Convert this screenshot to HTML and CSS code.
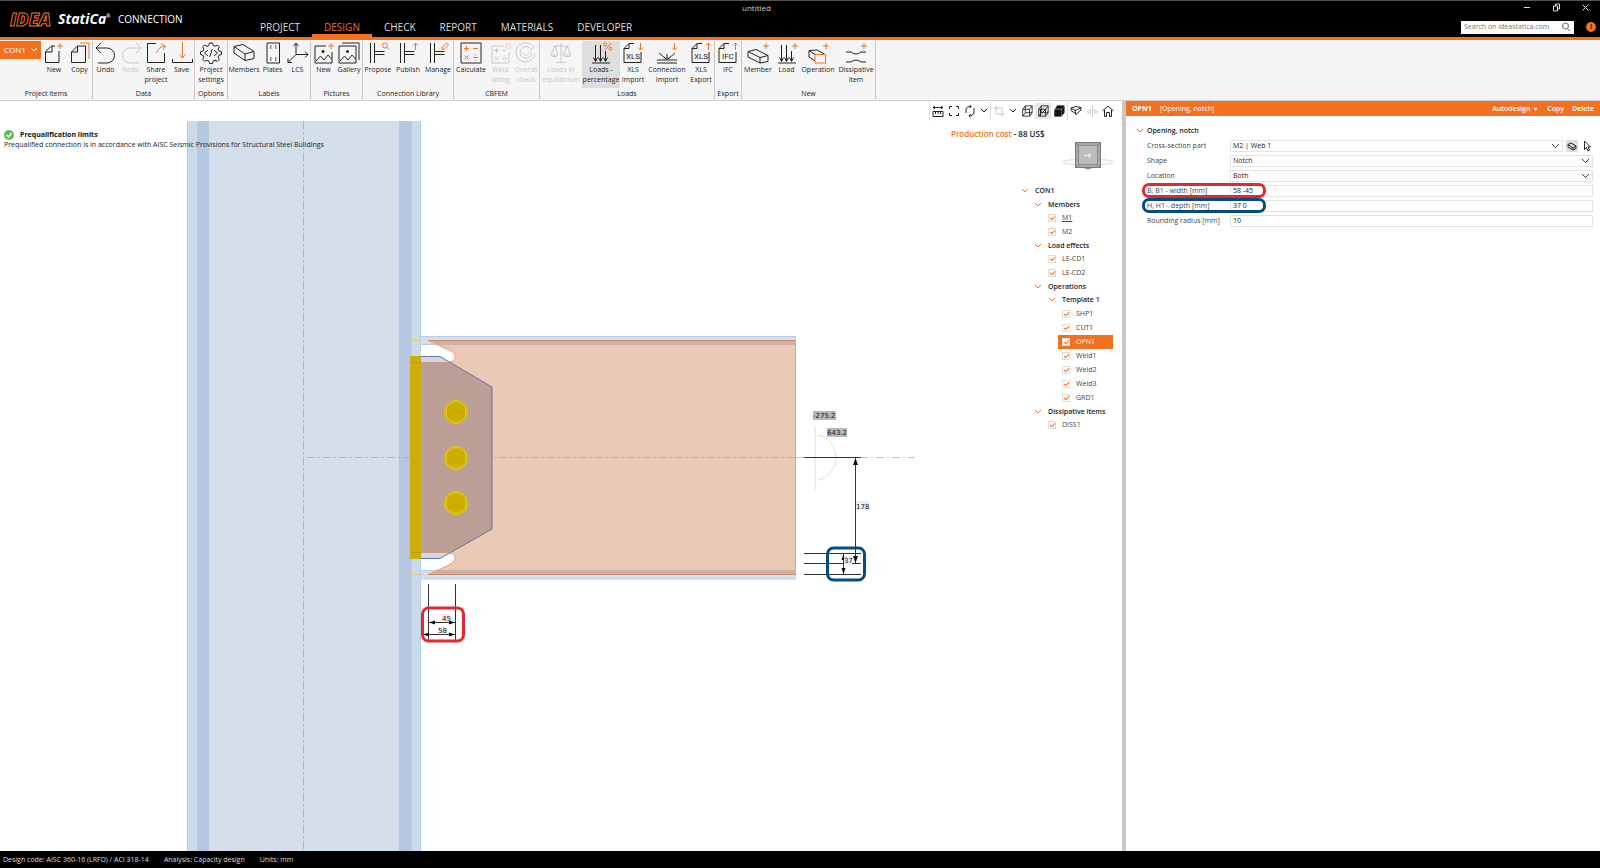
FILE: index.html
```html
<!DOCTYPE html>
<html lang="en">
<head>
  <meta charset="UTF-8">
  <meta name="viewport" content="width=device-width, initial-scale=1.0">
  <title>untitled - IDEA StatiCa Connection</title>
  <link rel="stylesheet" href="styles.css">
</head>
<body>
  <!-- icon set -->
  <svg class="icon-defs" aria-hidden="true">
    <symbol id="i-plus" viewBox="0 0 24 22"><path class="o" d="M17 4h6M20 1v6"/></symbol>
    <symbol id="i-new" viewBox="0 0 24 22"><path d="M17 9v11.500H3.500V9.500L9.500 4H13M3.500 10H10V4"/><path class="o" d="M15 4h6M18 1v6"/></symbol>
    <symbol id="i-copy" viewBox="0 0 24 22"><path d="M3.500 10V20.500H17.500V4H9.500zM3.500 10H9.500V4"/><path class="o" d="M12 1h9v16"/></symbol>
    <symbol id="i-undo" viewBox="0 0 24 22"><path d="M7 1L2 6l5 5M2 6h11a7.500 7.500 0 0 1 0 15H4"/></symbol>
    <symbol id="i-redo" viewBox="0 0 24 22"><path d="M17 1l5 5-5 5M22 6H11a7.500 7.500 0 0 0 0 15h9"/></symbol>
    <symbol id="i-share" viewBox="0 0 24 22"><path d="M12 1.500H3.500v19h17V11"/><path class="o" d="M12.500 11Q14 5 21 4M17 1.500L21.500 4 19 8"/></symbol>
    <symbol id="i-save" viewBox="0 0 24 22"><path d="M2.500 17v3.500h20V17"/><path class="o" d="M12.500 0v16M9.500 12.500l3 3.500 3-3.500"/></symbol>
    <symbol id="i-gear" viewBox="0 0 24 22"><path d="M10.500 1h3l.7 2.500 1.800.800L18.300 3l2 2-1.200 2.300.8 1.800 2.600.7v2.700l-2.600.8-.8 1.700 1.200 2.400-2 2-2.300-1.300-1.800.8-.7 2.600h-3l-.7-2.600-1.800-.8-2.300 1.300-2-2 1.200-2.400-.8-1.700-2.600-.8V9.800l2.600-.7.8-1.800L3.700 5l2-2L8 4.300l1.800-.8zM9 8l-3.500 3L9 14M15 8l3.500 3-3.500 3M13.300 7l-2.600 8"/></symbol>
    <symbol id="i-members" viewBox="0 0 24 22"><path d="M2 4.500L11 2.500 22 9.500 13 12zM2 4.500V11L13 18.500 22 16.500V9.500M13 12v6.500"/></symbol>
    <symbol id="i-plates" viewBox="0 0 24 22"><path d="M6 1h12.500v20H6z"/><path d="M9 4h1.500M14 4h1.500M9 6h1.500M14 6h1.500M9 16h1.500M14 16h1.500M9 18h1.500M14 18h1.500"/></symbol>
    <symbol id="i-lcs" viewBox="0 0 24 22"><path d="M10 1v11.500h12M10 12.500L2 20.500M7.500 4L10 1l2.500 3M19 9.500l3 3-3 3M2 16.500v4h4"/></symbol>
    <symbol id="i-picnew" viewBox="0 0 24 22"><path d="M14 4H3v17h17V10M4 19l4.500-5 3.500 4 4-5 3.500 4"/><circle class="f" cx="11" cy="9.500" r="1.500"/><path class="o" d="M16 4h6M19 1v6"/></symbol>
    <symbol id="i-gallery" viewBox="0 0 24 22"><path d="M2 4h17v17H2zM5 1h17v17M3 19l4.500-5 3.500 4 4-5 3.500 4"/><circle class="f" cx="10.500" cy="9.500" r="1.500"/></symbol>
    <symbol id="i-join" viewBox="0 0 24 22"><path d="M4.500 1v20M8.500 1v20M8.500 9.500h10M8.500 12.500h10"/></symbol>
    <symbol id="i-calc" viewBox="0 0 24 22"><path d="M2 1h20v20H2z"/><path class="o" d="M5 6.500h5M7.500 4v5M14 6.500h5M5.500 13.500l4 4M9.500 13.500l-4 4M14 15.500h5M16.500 12.500v1M16.500 17.500v1"/></symbol>
    <symbol id="i-weld" viewBox="0 0 24 22"><path d="M15 4H3v17h17V10M5 8.500h5M7.500 6v5M13 8.500h4M5.500 14.500l4 4M9.500 14.500l-4 4M13 16.500h5M15.500 13.500v1M15.500 18.500v1"/><circle class="o" cx="19.500" cy="4" r="2.500"/></symbol>
    <symbol id="i-check" viewBox="0 0 24 22"><path d="M19 4.500a9.500 9.500 0 1 0 2 7M17 7a6 6 0 1 0 1 4"/><path class="o" d="M8 10l4 4 9-10"/></symbol>
    <symbol id="i-scales" viewBox="0 0 24 22"><path d="M12 1v19.500M7 20.500h10M4 4h16M6 4L2 13h7zM18 4l-4 9h8zM3 14.500h5M15 14.500h6"/></symbol>
    <symbol id="i-loads" viewBox="0 0 24 22"><path d="M3 21h18M6.500 3v16M11.500 3v16M16.500 9v10M4.500 15.500l2 4 2-4M9.500 15.500l2 4 2-4M14.500 15.500l2 4 2-4"/></symbol>
    <symbol id="i-percent" viewBox="0 0 24 22"><path class="o" d="M22 1l-6 7"/><circle class="o" cx="16" cy="2.500" r="1.500"/><circle class="o" cx="21.500" cy="6.500" r="1.500"/></symbol>
    <symbol id="i-doc" viewBox="0 0 24 22"><path d="M13 1.500H8L3 6.500V20.500H20V10M3 6.500H8V1.500"/></symbol>
    <symbol id="i-up" viewBox="0 0 24 22"><path class="o" d="M19.500 8V1M17 3.500L19.500 1 22 3.500"/></symbol>
    <symbol id="i-down" viewBox="0 0 24 22"><path class="o" d="M19.500 1v7M17 5.500L19.500 8 22 5.500"/></symbol>
    <symbol id="i-connimp" viewBox="0 0 24 22"><path d="M2 18h20M2 21h20M4 11l7 6M20 11l-7 6M12 17V12M9 15l3 2.500L15 15"/></symbol>
    <symbol id="i-member" viewBox="0 0 24 22"><path d="M2 9.500L10 7.500 22 13.500 14 15.500zM2 9.500V15L14 21 22 19.500V13.500M14 15.500V21"/></symbol>
    <symbol id="i-operation" viewBox="0 0 24 22"><path d="M9 19L3 15V8.500L11 8 19 12.500M3 8.500L9 12.500"/><path class="o" d="M9 12.500h10.500V21H9z"/></symbol>
    <symbol id="i-diss" viewBox="0 0 24 22"><path d="M2 10h5q5 4 10 0h5M2 20h5q5-4 10 0h5"/></symbol>
    <symbol id="i-chev" viewBox="0 0 8 6"><path d="M1 1l3 3 3-3"/></symbol>
    <symbol id="i-search" viewBox="0 0 10 10"><circle cx="4.500" cy="4" r="3"/><path d="M6.500 6.500L9 9"/></symbol>
    <symbol id="i-cube" viewBox="0 0 14 14"><path d="M2 5l3-4h8v8l-3 4H2zM2 5h8v8M10 5l3-4M5 1v8h8M5 9l-3 4"/></symbol>
  </svg>

  <header class="header">
    <div class="brand">
      <span class="brand-idea">IDEA</span>
      <span class="brand-name">StatiCa<sup>®</sup></span>
      <span class="brand-app">CONNECTION</span>
    </div>
    <div class="titlebar">
      <div class="title">untitled</div>
      <button class="win-btn" aria-label="Minimize"><svg width="9" height="9"><path d="M1 4.500h6"/></svg></button>
      <button class="win-btn" aria-label="Restore"><svg width="9" height="9"><path d="M1.500 3h4v5h-4zM3.500 3V1h4v5H5.500"/></svg></button>
      <button class="win-btn" aria-label="Close"><svg width="9" height="9"><path d="M1.500 1.500l6 6M7.500 1.500l-6 6"/></svg></button>
    </div>
    <nav class="tabs">
      <a href="#project">PROJECT</a>
      <a href="#design" class="active">DESIGN</a>
      <a href="#check">CHECK</a>
      <a href="#report">REPORT</a>
      <a href="#materials">MATERIALS</a>
      <a href="#developer">DEVELOPER</a>
    </nav>
    <div class="tools">
      <div class="search">
        <input type="text" placeholder="Search on ideastatica.com" aria-label="Search on ideastatica.com">
        <svg class="icon" width="10" height="10"><use href="#i-search"/></svg>
      </div>
      <button class="info" aria-label="Info">i</button>
    </div>
  </header>

  <div class="ribbon">
    <section class="group">
      <div class="buttons">
        <button class="con">CON1 <svg class="icon" width="8" height="6"><use href="#i-chev"/></svg></button>
        <button class="rb w26"><svg class="icon" width="24" height="22"><use href="#i-new"/></svg>New</button>
        <button class="rb w25"><svg class="icon" width="24" height="22"><use href="#i-copy"/></svg>Copy</button>
      </div>
      <h2>Project items</h2>
    </section>
    <section class="group">
      <div class="buttons">
        <button class="rb w25"><svg class="icon" width="24" height="22"><use href="#i-undo"/></svg>Undo</button>
        <button class="rb w25" disabled><svg class="icon" width="24" height="22"><use href="#i-redo"/></svg>Redo</button>
        <button class="rb w26"><svg class="icon" width="24" height="22"><use href="#i-share"/></svg>Share<br>project</button>
        <button class="rb w25"><svg class="icon" width="24" height="22"><use href="#i-save"/></svg>Save</button>
      </div>
      <h2>Data</h2>
    </section>
    <section class="group">
      <div class="buttons">
        <button class="rb w32"><svg class="icon" width="24" height="22"><use href="#i-gear"/></svg>Project<br>settings</button>
      </div>
      <h2>Options</h2>
    </section>
    <section class="group">
      <div class="buttons">
        <button class="rb w32"><svg class="icon" width="24" height="22"><use href="#i-members"/></svg>Members</button>
        <button class="rb w25"><svg class="icon" width="24" height="22"><use href="#i-plates"/></svg>Plates</button>
        <button class="rb w25"><svg class="icon" width="24" height="22"><use href="#i-lcs"/></svg>LCS</button>
      </div>
      <h2>Labels</h2>
    </section>
    <section class="group">
      <div class="buttons">
        <button class="rb w25"><svg class="icon" width="24" height="22"><use href="#i-picnew"/></svg>New</button>
        <button class="rb w26"><svg class="icon" width="24" height="22"><use href="#i-gallery"/></svg>Gallery</button>
      </div>
      <h2>Pictures</h2>
    </section>
    <section class="group">
      <div class="buttons">
        <button class="rb w30"><svg class="icon" width="24" height="22"><use href="#i-join"/><circle class="o" cx="19" cy="3.500" r="2.500"/><path class="o" d="M21 5.500l2 2"/></svg>Propose</button>
        <button class="rb w30"><svg class="icon" width="24" height="22"><use href="#i-join"/><use href="#i-up"/></svg>Publish</button>
        <button class="rb w30"><svg class="icon" width="24" height="22"><use href="#i-join"/><path class="o" d="M16 7.500l.5-2.500 4-4 2 2-4 4z"/></svg>Manage</button>
      </div>
      <h2>Connection Library</h2>
    </section>
    <section class="group">
      <div class="buttons">
        <button class="rb w34"><svg class="icon" width="24" height="22"><use href="#i-calc"/></svg>Calculate</button>
        <button class="rb w25" disabled><svg class="icon" width="24" height="22"><use href="#i-weld"/></svg>Weld<br>sizing</button>
        <button class="rb w26" disabled><svg class="icon" width="24" height="22"><use href="#i-check"/></svg>Overall<br>check</button>
      </div>
      <h2>CBFEM</h2>
    </section>
    <section class="group">
      <div class="buttons">
        <button class="rb w42" disabled><svg class="icon" width="24" height="22"><use href="#i-scales"/></svg>Loads in<br>equilibrium</button>
        <button class="rb w38 on"><svg class="icon" width="24" height="22"><use href="#i-loads"/><use href="#i-percent"/></svg>Loads -<br>percentage</button>
        <button class="rb w26"><svg class="icon" width="24" height="22"><use href="#i-doc"/><use href="#i-down"/><text x="5" y="17">XLS</text></svg>XLS<br>Import</button>
        <button class="rb w42"><svg class="icon" width="24" height="22"><use href="#i-connimp"/><use href="#i-down"/></svg>Connection<br>Import</button>
        <button class="rb w26"><svg class="icon" width="24" height="22"><use href="#i-doc"/><use href="#i-up"/><text x="5" y="17">XLS</text></svg>XLS<br>Export</button>
      </div>
      <h2>Loads</h2>
    </section>
    <section class="group">
      <div class="buttons">
        <button class="rb w26"><svg class="icon" width="24" height="22"><use href="#i-doc"/><use href="#i-up"/><text x="6" y="17">IFC</text></svg>IFC</button>
      </div>
      <h2>Export</h2>
    </section>
    <section class="group">
      <div class="buttons">
        <button class="rb w32"><svg class="icon" width="24" height="22"><use href="#i-member"/><use href="#i-plus"/></svg>Member</button>
        <button class="rb w25"><svg class="icon" width="24" height="22"><use href="#i-loads"/><use href="#i-plus"/></svg>Load</button>
        <button class="rb w38"><svg class="icon" width="24" height="22"><use href="#i-operation"/><use href="#i-plus"/></svg>Operation</button>
        <button class="rb w38"><svg class="icon" width="24" height="22"><use href="#i-diss"/><use href="#i-plus"/></svg>Dissipative<br>item</button>
      </div>
      <h2>New</h2>
    </section>
  </div>

  <main class="main">
    <div class="view">
      <svg class="scene" viewBox="0 101 1122 750" preserveAspectRatio="xMinYMin slice">
        <!-- column -->
        <rect x="187" y="121" width="234" height="740" fill="#d4deea"/>
        <rect x="187" y="121" width="10" height="740" fill="#cbdaeb"/>
        <rect x="411" y="121" width="10" height="740" fill="#cbdaeb"/>
        <rect x="197" y="121" width="12" height="740" fill="#b5c7e0"/>
        <rect x="399" y="121" width="12" height="740" fill="#b5c7e0"/>
        <path d="M187.500 121v740M197.500 121v740M411.500 121v740M420.500 121v740" stroke="#b3cdec" fill="none"/>
        <path d="M303.500 121v740" stroke="#a3b9dc" stroke-dasharray="8 3 2 3" fill="none"/>

        <!-- beam -->
        <path d="M421 336h375v9H421zM421 570h375v9H421z" fill="#d3e0ec"/>
        <path d="M421 336.500h375M421 344.500h375M421 570.500h375M421 579h375" stroke="#b3cdec" fill="none"/>
        <path d="M428 340.500H795.500V574.500H428L449 565Q456 561 455 556.500Q453 552.500 448 552.500H421V362.500H448Q453 362.500 455 358.500Q456 353 449 350z" fill="#eacab6" stroke="#ef9b6e"/>
        <path d="M430 341h366v4H439zM439 570h357v4H430z" fill="#ccafa5"/>
        <path d="M428 340.500H796M428 574.500H796" stroke="#d08a68" fill="none"/>

        <!-- shear plate -->
        <path d="M421 356.500H440L492 387V529L440 558.500H421z" fill="#9fafcb" fill-opacity=".5"/>
        <path d="M421 362.500H450L492 387V529L450 552.500H421z" fill="#bb9f96"/>
        <path d="M421 356.500H440L492 387V529L440 558.500H421" fill="none" stroke="#69729f"/>
        <path d="M421 362.500H450M421 552.500H450" stroke="#cf9a86"/>
        <path d="M410 340.500h11M410 574.500h11" stroke="#dccd72"/>
        <path d="M307 457.500H796" stroke="#96a9cf" stroke-opacity=".7" stroke-dasharray="8 3 2 3"/>
        <path d="M796 457.500H915" stroke="#a5cdf0" stroke-dasharray="8 3 2 3"/>
        <rect x="410" y="356" width="11" height="203" fill="#cdae08"/>
        <path d="M411 362.500h10M411 552.500h10" stroke="#b79a1c"/>
        <g fill="#cbad00" stroke="#e6c71a">
          <circle cx="456" cy="412" r="11.500"/><path d="M456 401l9.500 5.500v11L456 423l-9.500-5.500v-11z"/>
          <circle cx="456" cy="458" r="11.500"/><path d="M456 447l9.500 5.500v11L456 469l-9.500-5.500v-11z"/>
          <circle cx="456" cy="503" r="11.500"/><path d="M456 492l9.500 5.500v11L456 514l-9.500-5.500v-11z"/>
        </g>

        <!-- dimensions -->
        <path d="M815 426v64M818 435a23 23 0 0 1 0 45" stroke="#e2e2e2" fill="none"/>
        <g stroke="#333" fill="none">
          <path d="M804 457.500h57M804 553.500h57M804 563.500h57M804 574.500h57"/>
          <path d="M855.500 458v105M843.500 554v20"/>
          <path d="M428.500 584v56M455.500 584v56M429 622.500h27M422 634.500h33"/>
        </g>
        <path d="M855.500 458l2.500 7h-5zM855.500 563l2.500-7h-5zM843.500 554l2 6h-4zM843.500 574l2-6h-4zM429 622.500l6-2v4zM455 622.500l-6-2v4zM423 634.500l6-2v4zM455 634.500l-6-2v4z" fill="#111"/>
        <g class="dim">
          <rect x="813" y="411" width="23" height="9" fill="#b9b9b9"/><text x="813" y="418">-275.2</text>
          <rect x="827" y="428" width="20" height="9" fill="#b9b9b9"/><text x="827" y="435">643.2</text>
          <rect x="856" y="501" width="13" height="9"/><text x="856" y="509">178</text>
          <rect x="844" y="556" width="8" height="8"/><text x="844" y="563">37</text>
          <rect x="442" y="614" width="9" height="7"/><text x="442" y="621">45</text>
          <rect x="438" y="626" width="9" height="7"/><text x="438" y="633">58</text>
        </g>
        <rect x="827.500" y="548" width="37" height="32" rx="6" class="mark-blue"/>
        <rect x="422.500" y="608" width="41" height="33" rx="6" class="mark-red"/>
      </svg>

      <div class="notice">
        <h3><svg width="10" height="10"><circle cx="5" cy="5" r="5" fill="#5bbf4e"/><path d="M2.500 5l2 2 3-4" fill="none" stroke="#fff" stroke-width="1.500"/></svg>Prequalification limits</h3>
        <p>Prequalified connection is in accordance with AISC Seismic Provisions for Structural Steel Buildings</p>
      </div>

      <aside class="side">
        <div class="toolbar">
          <button aria-label="Dimensions"><svg class="icon" width="14" height="14"><path d="M2 3.500h10M4 2L2 3.500 4 5M10 2l2 1.500L10 5M2 7.500h10v5H2zM4.500 8v2M7 8v2M9.500 8v2"/></svg></button>
          <button aria-label="Zoom all"><svg class="icon" width="14" height="14"><path d="M5 2.500H2.500V5M9 2.500h2.500V5M5 11.500H2.500V9M9 11.500h2.500V9"/></svg></button>
          <button aria-label="Rotate"><svg class="icon" width="14" height="14"><path d="M3 9V5q1-3 5-2.500L7 1M8 2.500L7 4M11 4v5q-1 3-5 3l1.500-2M6 12l1.500 1.500"/></svg></button>
          <button class="drop" aria-label="Rotate options"><svg class="icon" width="8" height="6"><use href="#i-chev"/></svg></button>
          <i></i>
          <button disabled aria-label="Crop"><svg class="icon" width="14" height="14"><path d="M4 1v9h9M1 4h9v9"/></svg></button>
          <button class="drop" aria-label="Crop options"><svg class="icon" width="8" height="6"><use href="#i-chev"/></svg></button>
          <button aria-label="Wireframe"><svg class="icon" width="12" height="12"><use href="#i-cube"/></svg></button>
          <button class="on" aria-label="Transparent"><svg class="icon" width="12" height="12"><use href="#i-cube"/><path d="M3.500 4v7M5 8l4-4"/></svg></button>
          <button aria-label="Solid"><svg class="icon" width="12" height="12" viewBox="0 0 14 14"><path d="M2 5.500h7.500V13H2zM10.500 5l2.500-3v7l-2.500 3zM3 4l2-3h8l-3 3z" fill="#111"/></svg></button>
          <i></i>
          <button aria-label="Section"><svg class="icon" width="14" height="14"><path d="M2 4l5-1.500 5 1V6L7 10.500 6 6.500zM2 4v2.500L7 10M6 6.500L12 4"/></svg></button>
          <button disabled aria-label="Mirror"><svg class="icon" width="14" height="14"><path d="M7.500 1v12M5.500 5.500v4L2 8zM9.500 5.500v4L13 8z"/></svg></button>
          <button aria-label="Home"><svg class="icon" width="14" height="14"><path d="M1.500 7L7 2l5.500 5M3.500 6v6.500h2V8.500h3v4h2V6"/></svg></button>
        </div>
        <p class="cost"><span>Production cost</span> - 88 US$</p>
        <svg class="navcube" width="52" height="30">
          <ellipse cx="26" cy="22" rx="25" ry="3" fill="none" stroke="#dcdcdc" stroke-width="1"/>
          <path d="M13.500 2.500h25v25h-25z" fill="#a9a9a9" stroke="#7a7a7a"/>
          <path d="M16.500 5.500h19v19h-19z" fill="#bcbcbc" stroke="#8c8c8c"/>
          <path d="M13.500 2.500l3 3M38.500 2.500l-3 3M13.500 27.500l3-3M38.500 27.500l-3-3M22 27.500l4 1.500 4-1.500" stroke="#777" fill="none"/>
          <text x="22" y="18">+Y</text>
        </svg>
        <ul class="tree">
          <li class="head"><svg class="icon" width="8" height="6"><use href="#i-chev"/></svg>CON1
          <li class="head sub l1"><svg class="icon" width="8" height="6"><use href="#i-chev"/></svg>Members
          <li class="l2"><label><input type="checkbox" checked><u>M1</u></label>
          <li class="l2"><label><input type="checkbox" checked>M2</label>
          <li class="head sub l1"><svg class="icon" width="8" height="6"><use href="#i-chev"/></svg>Load effects
          <li class="l2"><label><input type="checkbox" checked>LE-CD1</label>
          <li class="l2"><label><input type="checkbox" checked>LE-CD2</label>
          <li class="head sub l1"><svg class="icon" width="8" height="6"><use href="#i-chev"/></svg>Operations
          <li class="head l2"><svg class="icon" width="8" height="6"><use href="#i-chev"/></svg>Template 1
          <li class="l3"><label><input type="checkbox" checked>SHP1</label>
          <li class="l3"><label><input type="checkbox" checked>CUT1</label>
          <li class="l3 selected"><label><input type="checkbox" checked>OPN1</label>
          <li class="l3"><label><input type="checkbox" checked>Weld1</label>
          <li class="l3"><label><input type="checkbox" checked>Weld2</label>
          <li class="l3"><label><input type="checkbox" checked>Weld3</label>
          <li class="l3"><label><input type="checkbox" checked>GRD1</label>
          <li class="head sub l1"><svg class="icon" width="8" height="6"><use href="#i-chev"/></svg>Dissipative items
          <li class="l2"><label><input type="checkbox" checked>DISS1</label>
        </ul>
      </aside>
    </div>

    <div class="panel">
      <div class="panel-head">
        <b>OPN1</b>
        <span>[Opening, notch]</span>
        <button class="auto">Autodesign <small>▾</small></button>
        <button>Copy</button>
        <button>Delete</button>
      </div>
      <form class="props">
        <h3><svg class="icon" width="8" height="6"><use href="#i-chev"/></svg>Opening, notch</h3>
        <div class="row">
          <label for="part">Cross-section part</label>
          <select id="part"><option>M2 | Web 1</option></select>
          <button type="button" class="pick on" aria-label="Show part"><svg class="icon" width="10" height="10"><path d="M1 3.500L4 2l5 3-3 2zM1 3.500V6l5 3 3-1.500V5M6 7v2"/></svg></button>
          <button type="button" class="pick" aria-label="Pick in scene"><svg class="icon" width="10" height="12"><path d="M2.500 1v8.500l2-2 1.500 3.500 1.500-1L6 7h2.500z"/></svg></button>
        </div>
        <div class="row">
          <label for="shape">Shape</label>
          <select id="shape"><option>Notch</option></select>
        </div>
        <div class="row">
          <label for="location">Location</label>
          <select id="location"><option>Both</option></select>
        </div>
        <div class="row red">
          <label for="width">B, B1 - width [mm]</label>
          <input id="width" type="text" value="58 -45">
        </div>
        <div class="row blue">
          <label for="depth">H, H1 - depth [mm]</label>
          <input id="depth" type="text" value="37 0">
        </div>
        <div class="row">
          <label for="radius">Rounding radius [mm]</label>
          <input id="radius" type="text" value="10">
        </div>
      </form>
    </div>
  </main>

  <footer class="status">
    <span>Design code: AISC 360-16 (LRFD) / ACI 318-14</span>
    <span>Analysis: Capacity design</span>
    <span>Units: mm</span>
  </footer>
</body>
</html>
```

FILE: styles.css
```css
:root {
  --accent: #f37021;
  --line: #c8c8c8;
}

*, *::before, *::after {
  box-sizing: border-box;
}

html, body {
  margin: 0;
  height: 100%;
}

body {
  display: flex;
  flex-direction: column;
  overflow: hidden;
  font: 7px/10px "Open Sans", "Noto Sans", sans-serif;
  color: #222;
  background: #fff;
}

h2, h3, p, ul {
  margin: 0;
  padding: 0;
  font-size: inherit;
}

button, input, select {
  font: inherit;
  color: inherit;
  margin: 0;
  padding: 0;
  border: none;
  background: none;
}

.icon-defs {
  position: absolute;
  width: 0;
  height: 0;
}

.icon {
  display: block;
  flex: none;
  fill: none;
  stroke: currentColor;
  stroke-width: 1;
}

.icon text {
  font: 8px "Roboto", sans-serif;
  fill: currentColor;
  stroke: none;
}

.o {
  stroke: var(--accent);
  fill: none;
}

.f {
  fill: currentColor;
  stroke: none;
}

/* header */
.header {
  display: grid;
  grid-template-columns: 248px 1fr auto;
  grid-template-rows: 13px 23px;
  background: #000;
  color: #fff;
  border-top: 1px solid #555;
  border-bottom: 3px solid var(--accent);
}

.titlebar {
  grid-column: 1 / -1;
  grid-row: 1;
  display: flex;
  align-items: center;
}

.title {
  flex: 1;
  text-align: center;
  font-size: 8px;
  color: #ccc;
}

.win-btn {
  width: 29px;
  display: flex;
  justify-content: center;
}

.win-btn svg {
  fill: none;
  stroke: #ddd;
}

.brand {
  grid-column: 1;
  grid-row: 1 / 3;
  display: flex;
  align-items: center;
  padding-left: 10px;
}

.brand-idea {
  font: italic 800 18px/20px "Open Sans", sans-serif;
  color: #000;
  -webkit-text-stroke: 1px var(--accent);
  width: 48px;
}

.brand-name {
  font: italic bold 14px/20px "Open Sans", sans-serif;
  width: 60px;
}

.brand-name sup {
  font-size: 5px;
  line-height: 5px;
  vertical-align: 6px;
}

.brand-app {
  font-size: 10px;
}

.tabs {
  grid-column: 2;
  grid-row: 2;
  display: flex;
}

.tabs a {
  padding: 3px 12px 0;
  font-size: 10px;
  line-height: 20px;
  color: #ddd;
  text-decoration: none;
}

.tabs .active {
  color: var(--accent);
  box-shadow: inset 0 -3px var(--accent);
}

.tools {
  grid-column: 3;
  grid-row: 2;
  display: flex;
  align-items: center;
  gap: 12px;
  padding: 3px 4px 0 0;
}

.search {
  display: flex;
  align-items: center;
  width: 113px;
  height: 13px;
  padding: 0 3px;
  background: #fff;
  color: #666;
}

.search input {
  flex: 1;
  min-width: 0;
}

.search input::placeholder {
  color: #777;
}

.info {
  width: 10px;
  height: 10px;
  border-radius: 50%;
  background: var(--accent);
  color: #222;
  font-weight: bold;
}

/* ribbon */
.ribbon {
  display: flex;
  height: 61px;
  background: #f5f5f5;
  border-bottom: 1px solid #d0d0d0;
}

.group {
  display: flex;
  flex-direction: column;
  margin: 1px 0;
  border-right: 1px solid var(--line);
}

.buttons {
  display: flex;
  flex: 1;
  align-items: flex-start;
}

.group h2 {
  font-weight: normal;
  text-align: center;
  line-height: 10px;
}

.rb {
  height: 47px;
  padding-top: 1px;
  display: flex;
  flex-direction: column;
  align-items: center;
  justify-content: flex-start;
  line-height: 10px;
  white-space: nowrap;
}

.rb .icon {
  margin-bottom: 1px;
}

.rb:disabled {
  color: #c8c8c8;
  --accent: #f6cdb4;
}

.on {
  background: #dedede;
}

.w25 { width: 25px; }
.w26 { width: 26px; }
.w30 { width: 30px; }
.w32 { width: 32px; }
.w34 { width: 34px; }
.w38 { width: 38px; }
.w42 { width: 42px; }

.con {
  display: flex;
  align-items: center;
  justify-content: space-between;
  width: 41px;
  height: 18px;
  padding: 0 3px 0 4px;
  background: var(--accent);
  color: #fff;
  font-size: 8px;
}

/* main area */
.main {
  flex: 1;
  display: flex;
  min-height: 0;
}

.view {
  flex: 1;
  position: relative;
  display: flex;
  justify-content: space-between;
  overflow: hidden;
  border-right: 4px solid var(--line);
}

.scene {
  position: absolute;
  left: 0;
  top: 0;
  width: 100%;
  height: 100%;
}

.dim text {
  font: 7px "DejaVu Sans", sans-serif;
  fill: #111;
}

.dim rect {
  fill: #eee;
}

.dim rect[fill] {
  fill: #b9b9b9;
}

.mark-red, .mark-blue {
  fill: none;
  stroke: #e8272c;
  stroke-width: 3;
}

.mark-blue {
  stroke: #064a7e;
}

.notice {
  position: relative;
  padding: 28px 0 0 4px;
  white-space: nowrap;
}

.notice h3 {
  display: flex;
  align-items: center;
  gap: 6px;
  height: 11px;
  color: #111;
}

.side {
  position: relative;
  width: 193px;
  display: flex;
  flex-direction: column;
}

.toolbar {
  display: flex;
  align-items: center;
  height: 20px;
  border-left: 1px solid #ddd;
}

.toolbar button {
  width: 16px;
  height: 16px;
  display: flex;
  align-items: center;
  justify-content: center;
}

.toolbar .drop {
  width: 12px;
}

.toolbar i {
  width: 1px;
  height: 18px;
  background: #ddd;
}

.toolbar button:disabled {
  color: #ccc;
}

.toolbar .on {
  background: #e8e8e8;
}

.cost {
  margin: 8px 0 0 22px;
  font-size: 8px;
  font-weight: 600;
}

.cost span {
  color: var(--accent);
}

.navcube {
  margin: 1px 0 0 133px;
}

.navcube text {
  font: bold 6px "Open Sans", sans-serif;
  fill: #fff;
}

.tree {
  margin: 14px 9px 0 92px;
  list-style: none;
  color: #444;
}

.tree li {
  display: flex;
  align-items: center;
  height: 14px;
}

.tree .head {
  font-weight: 600;
  color: #222;
  gap: 6px;
}

.tree .sub {
  height: 13px;
}

.tree .head .icon,
.props h3 .icon {
  color: var(--accent);
}

.tree .l1 { margin-left: 13px; }
.tree .l2 { margin-left: 27px; }
.tree .l3 { margin-left: 37px; padding-left: 4px; }

.tree label {
  display: flex;
  align-items: center;
  gap: 6px;
}

.tree input {
  appearance: none;
  width: 8px;
  height: 8px;
  border: 1px solid #ddd;
  background: #fff;
  display: flex;
  align-items: center;
  justify-content: center;
}

.tree input:checked::before {
  content: "";
  width: 5px;
  height: 3px;
  margin-bottom: 2px;
  border-left: 1px solid var(--accent);
  border-bottom: 1px solid var(--accent);
  transform: rotate(-45deg);
}

.tree .selected {
  background: var(--accent);
  color: #fff;
}

/* property panel */
.panel {
  width: 474px;
}

.panel-head {
  display: flex;
  align-items: center;
  gap: 8px;
  height: 15px;
  padding: 0 6px;
  background: var(--accent);
  color: #fff;
}

.panel-head button {
  font-weight: 600;
}

.panel-head .auto {
  margin-left: auto;
}

.panel-head small {
  font-size: 6px;
  margin: 0 2px;
}

.props {
  padding: 7px 7px 0 10px;
}

.props h3 {
  display: flex;
  align-items: center;
  gap: 3px;
  height: 15px;
  font-weight: 600;
}

.row {
  position: relative;
  display: flex;
  align-items: center;
  height: 15px;
  padding-left: 11px;
}

.row label {
  width: 83px;
  color: #444;
}

.row select, .row > input {
  flex: 1;
  min-width: 0;
  height: 12px;
  padding: 0 2px;
  border: 1px solid #e3e3e3;
}

.row select {
  appearance: none;
  background: linear-gradient(45deg, transparent 45%, #444 45%, #444 60%, transparent 60%) right 6px center / 4px 4px no-repeat,
    linear-gradient(-45deg, transparent 45%, #444 45%, #444 60%, transparent 60%) right 3px center / 4px 4px no-repeat;
}

.pick {
  width: 12px;
  height: 12px;
  margin-left: 3px;
  display: flex;
  align-items: center;
  justify-content: center;
}

/* highlighted rows */
.red::after, .blue::after {
  content: "";
  position: absolute;
  left: 6px;
  top: 0;
  width: 124px;
  height: 15px;
  border: 3px solid #e8272c;
  border-radius: 7px;
  pointer-events: none;
}

.blue::after {
  border-color: #064a7e;
}

/* status bar */
.status {
  display: flex;
  gap: 15px;
  height: 17px;
  padding-left: 3px;
  line-height: 18px;
  background: #000;
  color: #ddd;
}
```
